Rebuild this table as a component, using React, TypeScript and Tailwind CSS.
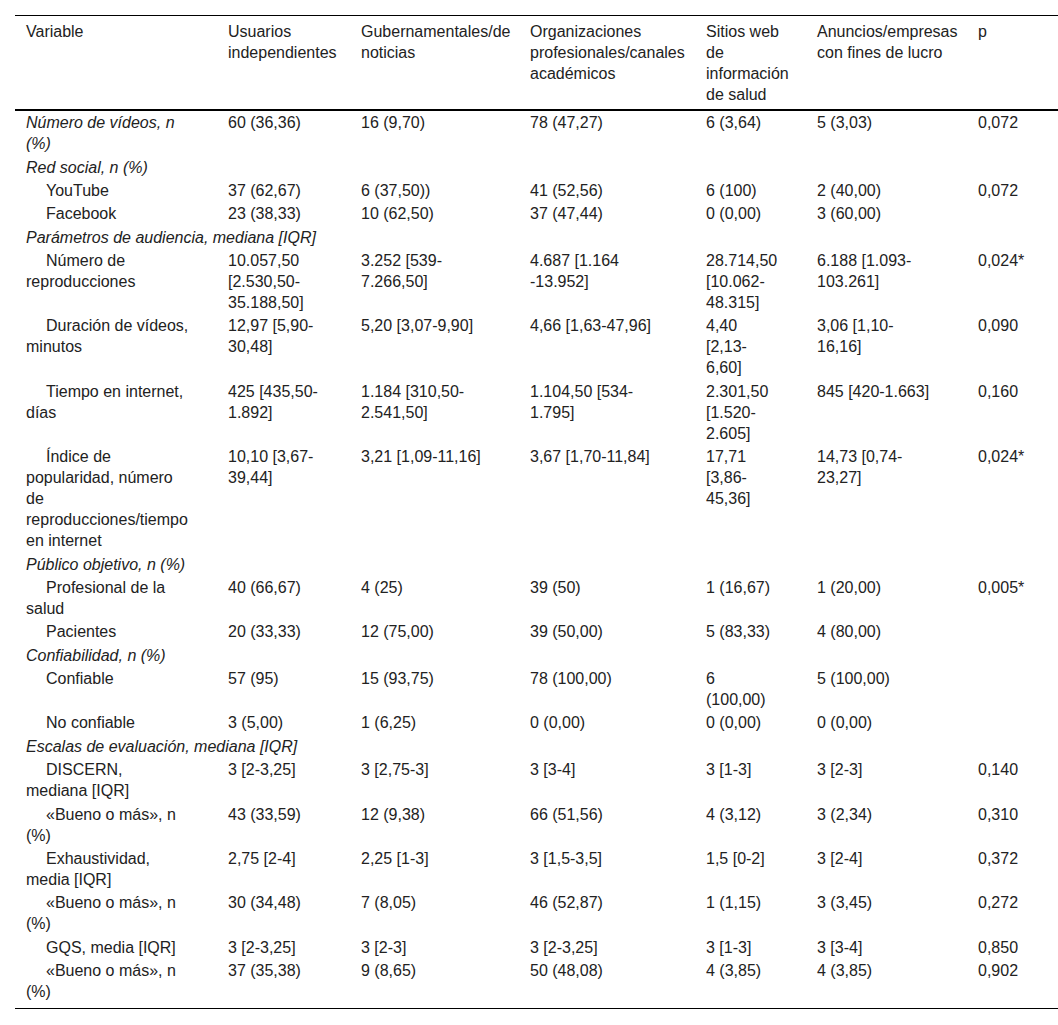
type Row =
  | { kind: 'group'; label: string }
  | { kind: 'data'; label: string; sub?: boolean; italic?: boolean; cells: string[] };

const HEADERS = [
  'Variable',
  'Usuarios\nindependientes',
  'Gubernamentales/de\nnoticias',
  'Organizaciones\nprofesionales/canales\nacadémicos',
  'Sitios web\nde\ninformación\nde salud',
  'Anuncios/empresas\ncon fines de lucro',
  'p',
];

// line breaks are written out so every cell wraps like the source table
const ROWS: Row[] = [
  { kind: 'data', italic: true, label: 'Número de vídeos, n\n(%)', cells: ['60 (36,36)', '16 (9,70)', '78 (47,27)', '6 (3,64)', '5 (3,03)', '0,072'] },
  { kind: 'group', label: 'Red social, n (%)' },
  { kind: 'data', sub: true, label: 'YouTube', cells: ['37 (62,67)', '6 (37,50))', '41 (52,56)', '6 (100)', '2 (40,00)', '0,072'] },
  { kind: 'data', sub: true, label: 'Facebook', cells: ['23 (38,33)', '10 (62,50)', '37 (47,44)', '0 (0,00)', '3 (60,00)', ''] },
  { kind: 'group', label: 'Parámetros de audiencia, mediana [IQR]' },
  { kind: 'data', sub: true, label: 'Número de\nreproducciones', cells: ['10.057,50\n[2.530,50-\n35.188,50]', '3.252 [539-\n7.266,50]', '4.687 [1.164\n-13.952]', '28.714,50\n[10.062-\n48.315]', '6.188 [1.093-\n103.261]', '0,024*'] },
  { kind: 'data', sub: true, label: 'Duración de vídeos,\nminutos', cells: ['12,97 [5,90-\n30,48]', '5,20 [3,07-9,90]', '4,66 [1,63-47,96]', '4,40\n[2,13-\n6,60]', '3,06 [1,10-\n16,16]', '0,090'] },
  { kind: 'data', sub: true, label: 'Tiempo en internet,\ndías', cells: ['425 [435,50-\n1.892]', '1.184 [310,50-\n2.541,50]', '1.104,50 [534-\n1.795]', '2.301,50\n[1.520-\n2.605]', '845 [420-1.663]', '0,160'] },
  { kind: 'data', sub: true, label: 'Índice de\npopularidad, número\nde\nreproducciones/tiempo\nen internet', cells: ['10,10 [3,67-\n39,44]', '3,21 [1,09-11,16]', '3,67 [1,70-11,84]', '17,71\n[3,86-\n45,36]', '14,73 [0,74-\n23,27]', '0,024*'] },
  { kind: 'group', label: 'Público objetivo, n (%)' },
  { kind: 'data', sub: true, label: 'Profesional de la\nsalud', cells: ['40 (66,67)', '4 (25)', '39 (50)', '1 (16,67)', '1 (20,00)', '0,005*'] },
  { kind: 'data', sub: true, label: 'Pacientes', cells: ['20 (33,33)', '12 (75,00)', '39 (50,00)', '5 (83,33)', '4 (80,00)', ''] },
  { kind: 'group', label: 'Confiabilidad, n (%)' },
  { kind: 'data', sub: true, label: 'Confiable', cells: ['57 (95)', '15 (93,75)', '78 (100,00)', '6\n(100,00)', '5 (100,00)', ''] },
  { kind: 'data', sub: true, label: 'No confiable', cells: ['3 (5,00)', '1 (6,25)', '0 (0,00)', '0 (0,00)', '0 (0,00)', ''] },
  { kind: 'group', label: 'Escalas de evaluación, mediana [IQR]' },
  { kind: 'data', sub: true, label: 'DISCERN,\nmediana [IQR]', cells: ['3 [2-3,25]', '3 [2,75-3]', '3 [3-4]', '3 [1-3]', '3 [2-3]', '0,140'] },
  { kind: 'data', sub: true, label: '«Bueno o más», n\n(%)', cells: ['43 (33,59)', '12 (9,38)', '66 (51,56)', '4 (3,12)', '3 (2,34)', '0,310'] },
  { kind: 'data', sub: true, label: 'Exhaustividad,\nmedia [IQR]', cells: ['2,75 [2-4]', '2,25 [1-3]', '3 [1,5-3,5]', '1,5 [0-2]', '3 [2-4]', '0,372'] },
  { kind: 'data', sub: true, label: '«Bueno o más», n\n(%)', cells: ['30 (34,48)', '7 (8,05)', '46 (52,87)', '1 (1,15)', '3 (3,45)', '0,272'] },
  { kind: 'data', sub: true, label: 'GQS, media [IQR]', cells: ['3 [2-3,25]', '3 [2-3]', '3 [2-3,25]', '3 [1-3]', '3 [3-4]', '0,850'] },
  { kind: 'data', sub: true, label: '«Bueno o más», n\n(%)', cells: ['37 (35,38)', '9 (8,65)', '50 (48,08)', '4 (3,85)', '4 (3,85)', '0,902'] },
];

export default function App() {
  return (
    <div className="min-h-screen bg-white pt-[15px] font-['Liberation_Sans',Arial,sans-serif] text-base leading-[21px] text-[#222]">
      <table className="ml-[15px] w-[1043px] table-fixed border-collapse border-y border-black">
        <colgroup>
          <col className="w-[202px]" />
          <col className="w-[133px]" />
          <col className="w-[169px]" />
          <col className="w-[176px]" />
          <col className="w-[111px]" />
          <col className="w-[161px]" />
          <col className="w-[91px]" />
        </colgroup>
        <thead>
          <tr className="border-b-2 border-black">
            {HEADERS.map((h) => (
              <th key={h} className="whitespace-pre pl-[11px] pt-[5px] pb-[4px] text-left align-top font-normal">
                {h}
              </th>
            ))}
          </tr>
        </thead>
        <tbody>
          {ROWS.map((row, i) => {
            const last = i === ROWS.length - 1;
            const pad = last ? 'pt-[1.2px] pb-[6px]' : 'py-[1.2px]';
            if (row.kind === 'group') {
              return (
                <tr key={i}>
                  <td colSpan={7} className={`whitespace-pre pl-[11px] italic ${pad}`}>
                    {row.label}
                  </td>
                </tr>
              );
            }
            return (
              <tr key={i}>
                <td className={`whitespace-pre pl-[11px] align-top ${pad} ${row.sub ? 'indent-5' : ''} ${row.italic ? 'italic' : ''}`}>
                  {row.label}
                </td>
                {row.cells.map((c, j) => (
                  <td key={j} className={`whitespace-pre pl-[11px] align-top ${pad}`}>
                    {c}
                  </td>
                ))}
              </tr>
            );
          })}
        </tbody>
      </table>
    </div>
  );
}
